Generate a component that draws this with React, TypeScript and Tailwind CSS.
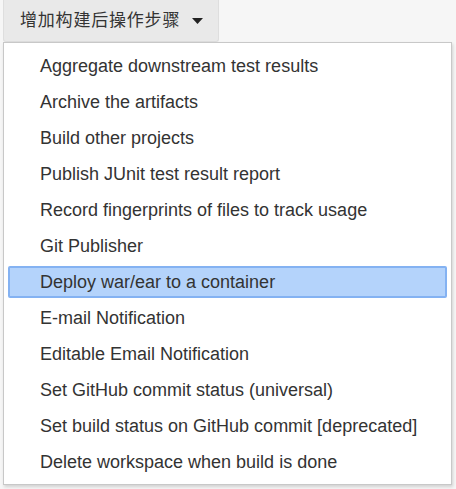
import React from 'react';

const ITEMS = [
  'Aggregate downstream test results',
  'Archive the artifacts',
  'Build other projects',
  'Publish JUnit test result report',
  'Record fingerprints of files to track usage',
  'Git Publisher',
  'Deploy war/ear to a container',
  'E-mail Notification',
  'Editable Email Notification',
  'Set GitHub commit status (universal)',
  'Set build status on GitHub commit [deprecated]',
  'Delete workspace when build is done',
];

const ACTIVE = 6;

export default function App() {
  return (
    <div className="w-[456px] h-[489px] bg-[#f6f6f6] pl-[3px] font-['Liberation_Sans','Noto_Sans_CJK_SC',sans-serif] overflow-hidden">
      {/* trigger button */}
      <div className="w-[216px] h-[42px] bg-[#e9e9e9] border border-[#dedede] border-t-0 rounded-b-[3px] flex items-center pl-[16px] text-[17px] text-[#333]">
        <span className="tracking-[0.8px]">增加构建后操作步骤</span>
        <svg className="ml-[12px]" width="11" height="6" viewBox="0 0 11 6">
          <path d="M0 0 L11 0 L5.5 6 Z" fill="#222" />
        </svg>
      </div>

      {/* dropdown menu */}
      <div className="w-[449px] bg-white border border-[#c8c8c8] shadow-[1px_2px_3px_rgba(0,0,0,0.15)] pt-[5px] pb-[4px] px-[4px]">
        {ITEMS.map((label, i) => (
          <div key={i} className="h-[36px] py-[2px]">
            <div
              className={`h-full flex items-center pl-[30px] text-[18px] text-[#333] rounded-[2px] border-2 ${
                i === ACTIVE ? 'bg-[#b4d3fb] border-[#84b2f2]' : 'border-transparent'
              }`}
            >
              {label}
            </div>
          </div>
        ))}
      </div>
    </div>
  );
}
